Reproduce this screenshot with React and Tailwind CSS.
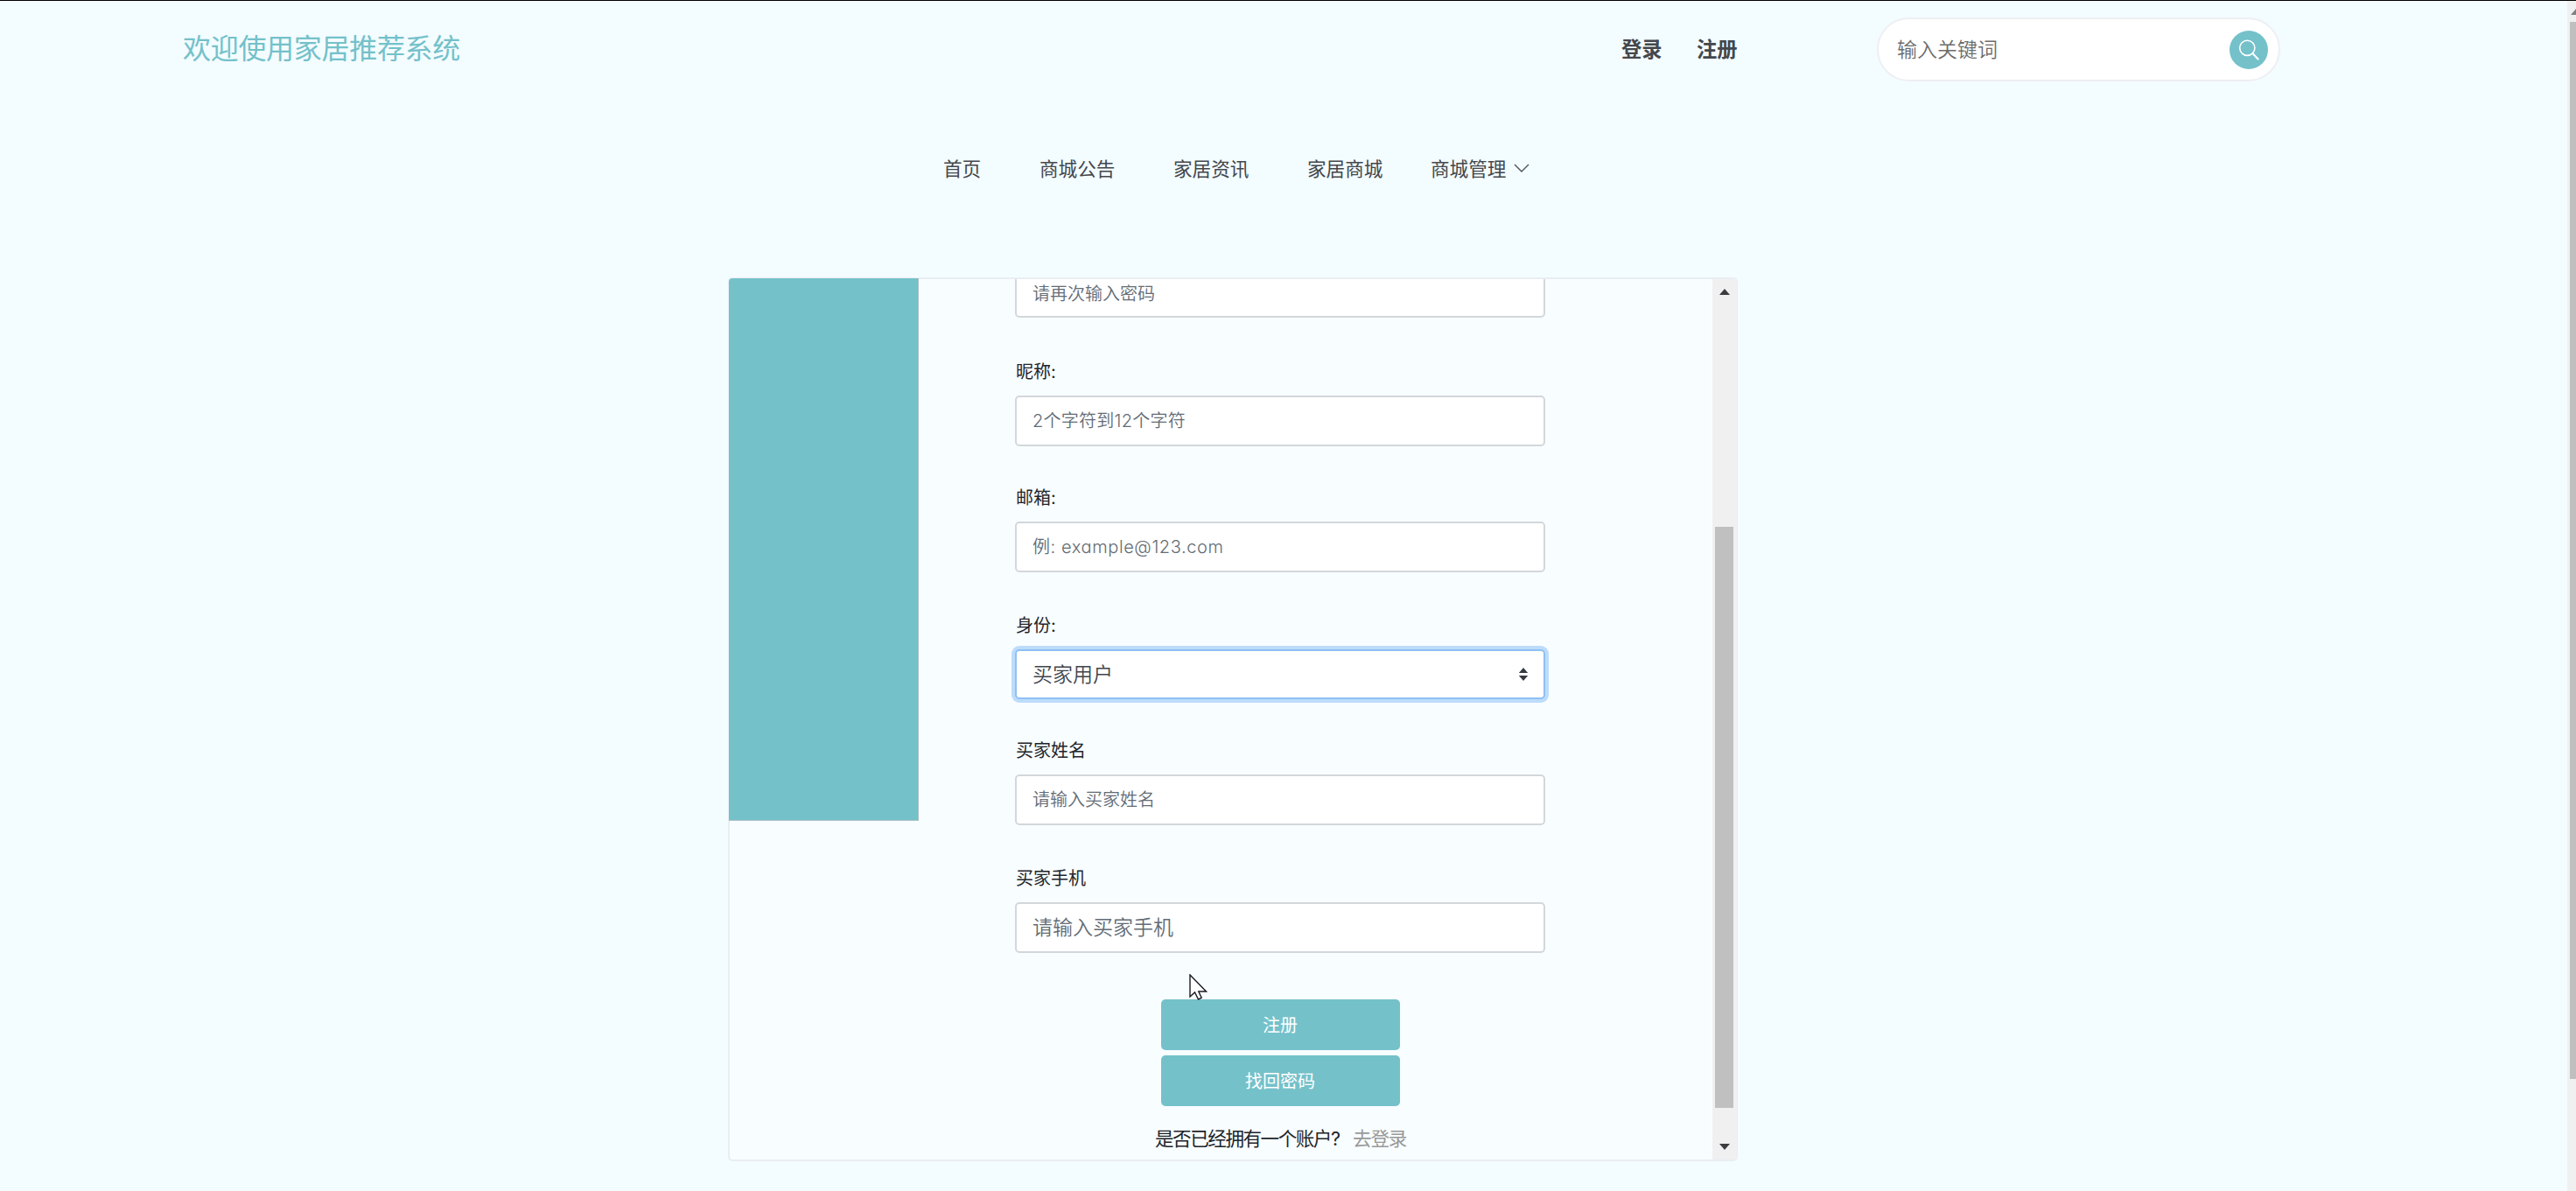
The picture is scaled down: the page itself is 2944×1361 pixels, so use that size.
import React from "react";

const navItems = [
  { text: "首页", cls: "ml-[1078px] w-[110px]" },
  { text: "商城公告", cls: "w-[153px]" },
  { text: "家居资讯", cls: "w-[153px]" },
  { text: "家居商城", cls: "w-[141px]" },
  { text: "商城管理", cls: "w-[95px]" },
];

const fields = [
  { label: "昵称:", hint: "2个字符到12个字符", gap: "mt-[47px]", size: "text-[20px] tracking-[0.25px]" },
  { label: "邮箱:", hint: "例: example@123.com", gap: "mt-[44px]", size: "text-[20px] tracking-[0.6px]" },
  { label: "身份:", value: "买家用户", gap: "mt-[46px]" },
  { label: "买家姓名", hint: "请输入买家姓名", gap: "mt-[44px]", size: "text-[20px]" },
  { label: "买家手机", hint: "请输入买家手机", gap: "mt-[46px]", size: "text-[23px]" },
];

const boxClass =
  "flex h-[58px] w-[606px] items-center rounded-[5px] border-2 border-[#d3d7dc] bg-white pl-[18px] leading-[30px] font-[350] text-[#636c75]";

function Header() {
  return (
    <header className="flex h-[110px] items-start">
      <h1 className="ml-[209px] mt-[35px] w-[1644px] text-[32px] leading-[40px] tracking-[-0.3px] text-[#74c1ca]">
        欢迎使用家居推荐系统
      </h1>
      <a className="mt-[41px] w-[86px] text-[23.3px] font-bold leading-[30px] text-[#44474c]">登录</a>
      <a className="mt-[41px] w-[206px] text-[23.3px] font-bold leading-[30px] text-[#44474c]">注册</a>
      <div className="mt-[19px] flex h-[73px] w-[461px] items-center justify-between rounded-full border-2 border-[#eeeff3] bg-white pl-[21px] pr-[12px]">
        <span className="text-[23px] font-[350] leading-[30px] text-[#6c6c6c]">输入关键词</span>
        <span className="flex size-[44px] items-center justify-center rounded-full bg-[#74c1ca]">
          <svg viewBox="0 0 24 24" className="size-[24px]" fill="none" stroke="white" strokeWidth="1.6" strokeLinecap="round">
            <circle cx="10.3" cy="9.8" r="8.6" />
            <path d="M16.6 16.2L22.6 22.4" strokeWidth="2.2" />
          </svg>
        </span>
      </div>
    </header>
  );
}

function Nav() {
  return (
    <nav className="mt-[67px] flex h-[30px] items-center text-[21.6px] leading-[30px] text-[#44474c]">
      {navItems.map((n) => (
        <a key={n.text} className={`shrink-0 whitespace-nowrap ${n.cls}`}>
          {n.text}
        </a>
      ))}
      <svg viewBox="0 0 18 10" className="-mt-[2px] h-[10px] w-[18px]" fill="none" stroke="#505459" strokeWidth="1.4">
        <path d="M1 1L9 9L17 1" />
      </svg>
    </nav>
  );
}

function Field({ label, hint, value, gap, size }) {
  return (
    <div className={gap}>
      <div className="mb-[12px] h-[30px] pl-px text-[20px] leading-[30px] text-[#212529]">{label}</div>
      {value ? (
        <div className="flex h-[57px] w-[606px] items-center justify-between rounded-[5px] border-2 border-[#8fc0f2] bg-white pl-[18px] pr-[17px] text-[23px] font-[350] leading-[30px] text-[#3f464d] shadow-[0_0_0_4px_#bddcfb]">
          {value}
          <svg viewBox="0 0 12 16" className="h-[15px] w-[12px]" fill="#343a40">
            <path d="M0.5 6.5L6 0L11.5 6.5ZM0.5 9.5L6 16L11.5 9.5Z" />
          </svg>
        </div>
      ) : (
        <div className={`${boxClass} ${size}`}>{hint}</div>
      )}
    </div>
  );
}

function Card() {
  return (
    <main className="relative ml-[832px] mt-[109px] flex h-[1010px] w-[1154px] rounded-[5px] border-2 border-r border-[#e9eef2] bg-[#f8fdff]">
      <div className="-ml-px -mt-px h-[620px] w-[217px] shrink-0 rounded-tl-[4px] border-b border-r border-[#a9bfc5] bg-[#74c1ca]" />
      <div className="ml-[106px] flex h-full w-[614px] shrink-0 flex-col overflow-hidden px-[4px]">
        <div className="-mt-[14px]">
          <div className={`${boxClass} pt-[3px] text-[20px]`}>请再次输入密码</div>
        </div>
        {fields.map((f) => (
          <Field key={f.label} {...f} />
        ))}
        <div className="mt-[53px] flex flex-col items-center gap-[6px]">
          <button className="h-[58px] w-[273px] rounded-[5px] bg-[#74c1ca] pt-[2px] text-[20px] leading-[30px] text-white">注册</button>
          <button className="h-[58px] w-[273px] rounded-[5px] bg-[#74c1ca] pt-[2px] text-[20px] leading-[30px] text-white">找回密码</button>
        </div>
        <div className="ml-[160px] mt-[21px] flex h-[32px] text-[21.6px] leading-[32px] tracking-[-1.5px]">
          <span className="w-[226px] whitespace-nowrap text-[#212529]">是否已经拥有一个账户?</span>
          <a className="whitespace-nowrap tracking-[-1.2px] text-[#999999]">去登录</a>
        </div>
      </div>
      <div className="ml-auto flex h-full w-[28px] flex-col items-start rounded-r-[3px] bg-[#f0f0f1]">
        <svg viewBox="0 0 12 7" className="ml-[8px] mt-[11px] h-[7px] w-[12px]" fill="#3c3c3e">
          <path d="M0 7L6 0L12 7Z" />
        </svg>
        <div className="ml-[3px] mt-[265px] h-[664px] w-[21px] bg-[#c0c0c0]" />
        <svg viewBox="0 0 12 7" className="ml-[8px] mt-[41px] h-[7px] w-[12px]" fill="#3c3c3e">
          <path d="M0 0L6 7L12 0Z" />
        </svg>
      </div>
      <svg viewBox="0 0 21 30" className="absolute left-[525px] top-[794px] h-[30px] w-[21px]">
        <path d="M1 1V26L6.5 21L10.5 29L14.2 27.2L10.8 20H19.5Z" fill="white" stroke="#1b1b22" strokeWidth="1.4" />
      </svg>
    </main>
  );
}

export default function App() {
  return (
    <div
      className="flex h-[1361px] w-[2944px] overflow-hidden border-t border-black bg-[#f3fcff]"
      style={{ fontFamily: 'Inter, "Noto Sans CJK SC", sans-serif', fontFeatureSettings: '"cv11"' }}
    >
      <div className="w-[2934px] shrink-0">
        <Header />
        <Nav />
        <Card />
      </div>
      <div className="h-full w-[10px] shrink-0 overflow-hidden bg-[#f0f0f1]">
        <svg viewBox="0 0 12 7" className="ml-[4px] mt-[9px] h-[7px] w-[12px]" fill="#808083">
          <path d="M0 7L6 0L12 7Z" />
        </svg>
        <div className="ml-[3px] mt-[8px] h-[1208px] w-[7px] bg-[#bfbfbf]" />
      </div>
    </div>
  );
}
